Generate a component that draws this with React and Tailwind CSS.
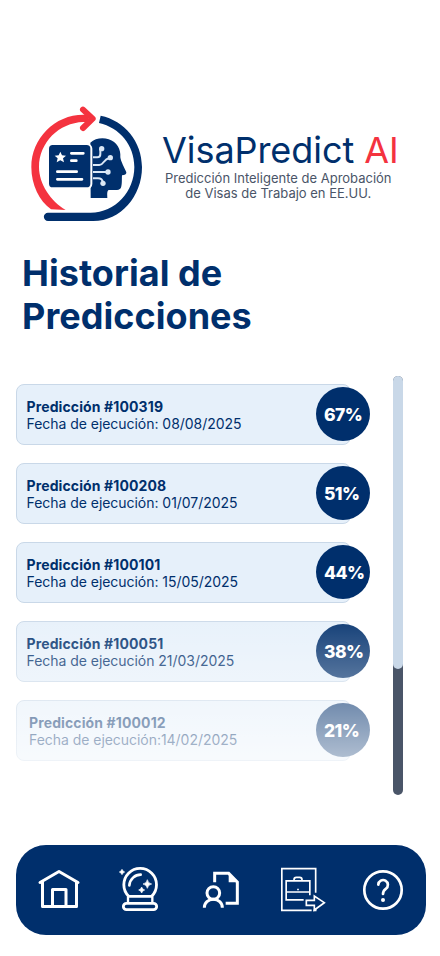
const predictions = [
  { id: '100319', date: 'Fecha de ejecución: 08/08/2025', score: '67%', pad: 'pl-[9.500px]' },
  { id: '100208', date: 'Fecha de ejecución: 01/07/2025', score: '51%', pad: 'pl-[9.500px]' },
  { id: '100101', date: 'Fecha de ejecución: 15/05/2025', score: '44%', pad: 'pl-[9.500px]' },
  { id: '100051', date: 'Fecha de ejecución 21/03/2025', score: '38%', pad: 'pl-[9.500px]' },
  { id: '100012', date: 'Fecha de ejecución:14/02/2025', score: '21%', pad: 'pl-[12px]' },
];

function Logo() {
  return (
    <svg className="h-[135px] w-[135px] shrink-0" viewBox="0 0 405 405" fill="none">
      <path d="M93 343C58 318 34 270 34 216C34 130 104 59 190 59L206 60V81L190 81C117 83 57 143 57 216C57 267 92 318 137 345Z" fill="#f4333f" />
      <path d="M189 44L218 71L189 99" stroke="#f4333f" strokeWidth="18" strokeLinecap="round" strokeLinejoin="round" />
      <path d="M242 62C314 77 366 140 366 216C366 304 302 378 220 378H84A12.500 12.500 0 0 1 84 353H212C286 353 343 290 343 216C343 150 299 98 237 84Z" fill="#002f6c" />
      <path d="M211 143C225 130 248 127 266 133C291 141 303 163 301 187C302 199 314 219 319 232C320 238 314 241 306 241C305 252 307 270 302 280C297 288 280 284 266 285C260 289 262 299 262 309H212Z" fill="#002f6c" />
      <rect x="82" y="145" width="135" height="138" rx="16" fill="#fff" />
      <rect x="87" y="150" width="124" height="127" rx="11" fill="#002f6c" />
      <path d="M121 170L126 181L138 182L129 190L132 202L121 196L110 202L113 190L104 182L116 181Z" fill="#fff" />
      <path d="M154 175H190M154 197H169M112 230H170M112 253H186" stroke="#fff" strokeWidth="8" strokeLinecap="round" />
      <g stroke="#dbe8f6" strokeWidth="6">
        <path d="M219 187H232Q241 187 241 177V162M219 210H238C252 210 250 192 268 189M219 231H262M219 250H234Q247 250 249 263" />
      </g>
      <g fill="#dbe8f6"><circle cx="245" cy="161" r="8" /><circle cx="271" cy="188" r="8" /><circle cx="264" cy="231" r="8" /><circle cx="249" cy="265" r="8" /></g>
    </svg>
  );
}

function HomeIcon() {
  return (
    <svg className="h-[45px] w-[50px]" viewBox="0 0 50 45" fill="none" stroke="#fff" strokeWidth="3" strokeLinecap="round" strokeLinejoin="round">
      <path d="M6 19.500L25 8.500L44 19.500M8.500 19V43.500H42.500V19M18.500 43V26.500H32V43" />
    </svg>
  );
}

function CrystalBallIcon() {
  return (
    <svg className="h-[60px] w-[60px]" viewBox="0 0 180 180" fill="none" stroke="#fff">
      <path d="M56 109A49 49 0 1 1 125 109Z" strokeWidth="8.500" strokeLinejoin="round" />
      <path d="M54 109V127M127 109V127" strokeWidth="7" />
      <rect x="40" y="130" width="100" height="19" rx="9.500" strokeWidth="8.500" />
      <path d="M58 76C60 57 75 44 92 44" strokeWidth="8" strokeLinecap="round" />
      <path d="M112 59Q114 70 125 72Q114 74 112 85Q110 74 99 72Q110 70 112 59ZM95 81Q97 88 104 90Q97 92 95 99Q93 92 86 90Q93 88 95 81ZM36 28Q38 34 44 36Q38 38 36 44Q34 38 28 36Q34 34 36 28Z" fill="#fff" strokeWidth="2" />
    </svg>
  );
}

function ProfileIcon() {
  return (
    <svg className="h-[50px] w-[50px]" viewBox="0 0 150 150" fill="none" stroke="#fff" strokeWidth="9">
      <path d="M44 67V40H86L112 66V130H77" />
      <path d="M86 40V67H112Z" fill="#fff" stroke="none" />
      <circle cx="40" cy="99" r="19" />
      <path d="M13 143C13 128 25 118 40 118S67 128 67 143" />
    </svg>
  );
}

function JobIcon() {
  return (
    <svg className="h-[50px] w-[50px]" viewBox="0 0 150 150" fill="none" stroke="#fff" strokeWidth="5">
      <path d="M104 86V14H2.500V139H92M97 139H104V133" />
      <path d="M68 107.500H15.500V50.500H86.500V94M15.500 84H86.500" />
      <path d="M39 50V47Q39 40 46 40H56Q63 40 63 47V50" />
      <path d="M51 74V79" />
      <path d="M76 109H100V96L130 116L100 138V124H76Z" />
    </svg>
  );
}

function HelpIcon() {
  return (
    <svg className="h-[42px] w-[42px]" viewBox="0 0 42 42" fill="none" stroke="#fff" strokeWidth="2.700" strokeLinecap="round">
      <circle cx="21" cy="21" r="18.700" />
      <path d="M16.300 15.600A4.800 4.800 0 1 1 23.800 19.800C22 21 21 22 21 25" />
      <circle cx="21" cy="31" r="2" fill="#fff" stroke="none" />
    </svg>
  );
}

export default function App() {
  return (
    <main className="flex h-[956px] w-[440px] flex-col overflow-hidden bg-white font-['Inter',sans-serif] text-[#002f6c]">
      <header className="flex h-[230px] items-end pl-5">
        <Logo />
        <div className="mb-[29px] ml-[7px] w-[236px] text-center">
          <p className="whitespace-nowrap text-[36px] leading-[41px] tracking-[-0.06px]">VisaPredict <span className="text-[#f4333f]">AI</span></p>
          <p className="-ml-[3.500px] whitespace-nowrap text-[13px] leading-[15px] text-[#4a5568]">Predicción Inteligente de Aprobación<br />de Visas de Trabajo en EE.UU.</p>
        </div>
      </header>
      <h1 className="mt-[22px] ml-[22px] text-[36px] leading-[43px] font-bold tracking-[0.05px]">Historial de<br />Predicciones</h1>
      <section className="mt-[38px] ml-4 flex h-[419px]">
        <ul className="relative mt-2 flex w-[354px] flex-col gap-[18px]">
          {predictions.map((p) => (
            <li key={p.id} className="flex h-[61px]">
              <div className={`h-[61px] w-[335px] shrink-0 rounded-lg border border-[#c9d8e8] bg-[#e6f0fa] pt-[13px] text-[14px] leading-[17px] whitespace-nowrap ${p.pad}`}>
                <p className="font-bold tracking-[0.12px]">Predicción #{p.id}</p>
                <p className="tracking-[-0.04px]">{p.date}</p>
              </div>
              <div className="mt-[3px] -ml-[35px] h-[54px] w-[54px] shrink-0 rounded-full bg-[#002f6c]" />
            </li>
          ))}
          <div className="absolute top-[218px] left-0 h-[227px] w-full bg-linear-to-b from-white/0 to-white" />
          <div className="absolute top-px left-[308px] flex flex-col gap-[18px] text-[17.500px] font-extrabold tracking-[-0.600px] text-white">
            {predictions.map((p) => <span key={p.id} className="flex h-[61px] items-center">{p.score}</span>)}
          </div>
        </ul>
        <div className="ml-[23px] h-[419px] w-[10px] rounded-full bg-[#4a5568]">
          <div className="h-[293px] rounded-full bg-[#c9d8e8]" />
        </div>
      </section>
      <nav className="mt-[50px] ml-4 flex h-[90px] w-[410px] shrink-0 rounded-[30px] bg-[#002f6c]">
        <span className="mt-[18px] ml-[18px]"><HomeIcon /></span>
        <span className="mt-[15px] ml-[26px]"><CrystalBallIcon /></span>
        <span className="mt-[15px] ml-[30px]"><ProfileIcon /></span>
        <span className="mt-[19px] ml-[31px]"><JobIcon /></span>
        <span className="mt-[24px] ml-[31px]"><HelpIcon /></span>
      </nav>
    </main>
  );
}
